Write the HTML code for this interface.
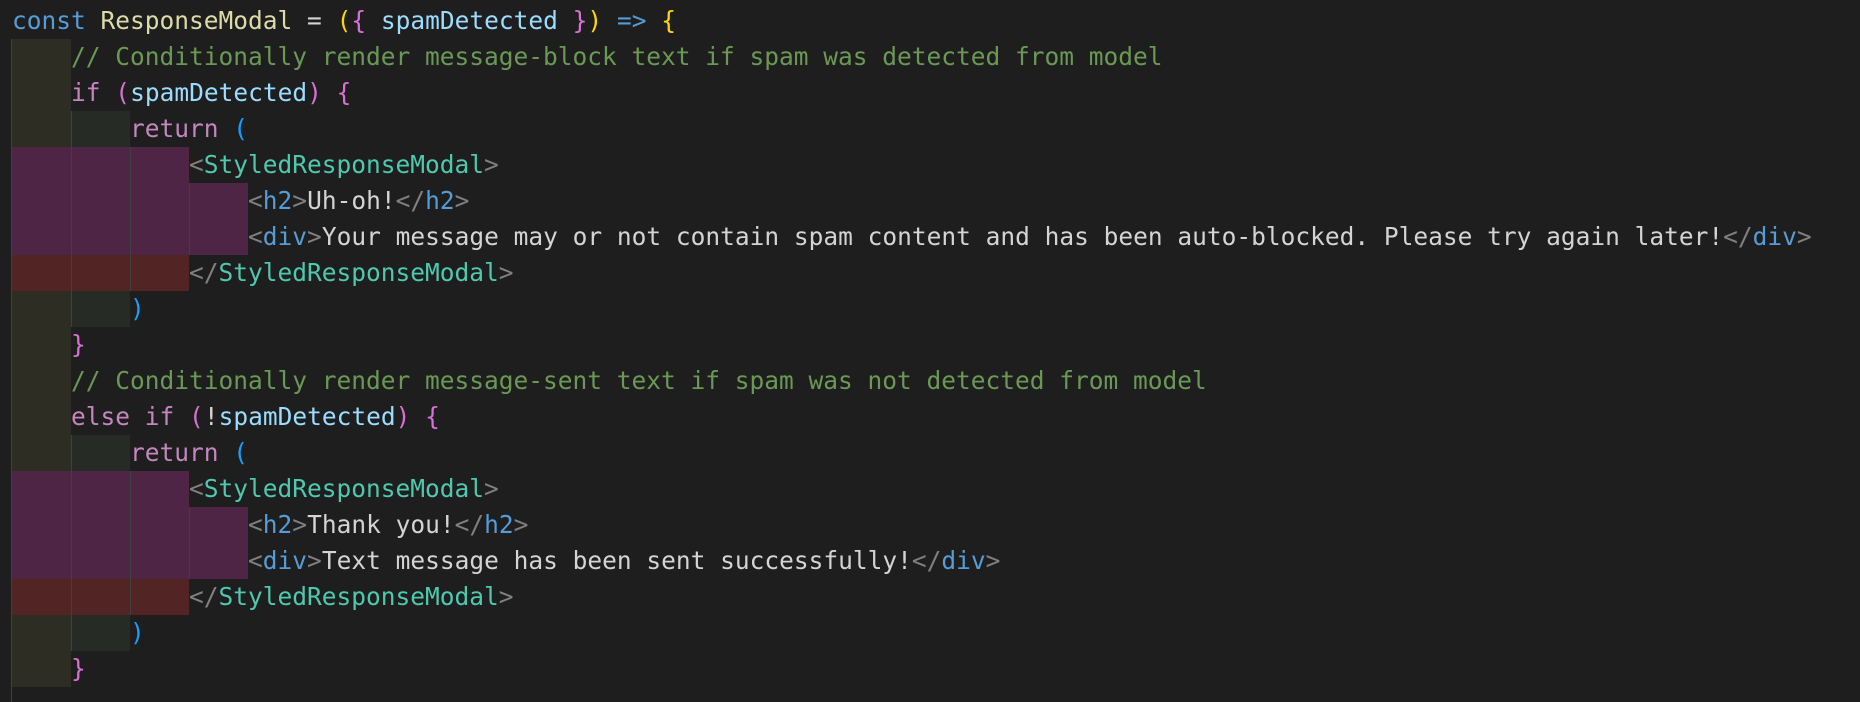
<!DOCTYPE html>
<html><head><meta charset="utf-8"><style>
html,body{margin:0;padding:0;background:#1e1e1e;width:1860px;height:702px;overflow:hidden}
.bg{position:absolute;height:36px}
.y{background:#2d2d24}.g{background:#262b26}.p{background:#4f2545}.r{background:#522424}
.guide{position:absolute;width:1px;background:#404040}
.code{position:absolute;left:12px;top:3px;font-family:"DejaVu Sans Mono","Liberation Mono",monospace;font-size:24.5px;line-height:36px;white-space:pre;color:#d4d4d4}
.k{color:#569cd6}.f{color:#dcdcaa}.v{color:#9cdcfe}.c{color:#6a9955}.m{color:#c586c0}
.b1{color:#ffd700}.b2{color:#da70d6}.b3{color:#179fff}.t{color:#808080}.n{color:#4ec9b0}
</style></head><body>
<div class="bg y" style="left:12px;width:59px;top:39px;height:72px"></div>
<div class="bg y" style="left:12px;width:59px;top:111px"></div><div class="bg g" style="left:71px;width:59px;top:111px"></div>
<div class="bg p" style="left:12px;width:177px;top:147px"></div>
<div class="bg p" style="left:12px;width:236px;top:183px;height:72px"></div>
<div class="bg r" style="left:12px;width:177px;top:255px"></div>
<div class="bg y" style="left:12px;width:59px;top:291px"></div><div class="bg g" style="left:71px;width:59px;top:291px"></div>
<div class="bg y" style="left:12px;width:59px;top:327px;height:108px"></div>
<div class="bg y" style="left:12px;width:59px;top:435px"></div><div class="bg g" style="left:71px;width:59px;top:435px"></div>
<div class="bg p" style="left:12px;width:177px;top:471px"></div>
<div class="bg p" style="left:12px;width:236px;top:507px;height:72px"></div>
<div class="bg r" style="left:12px;width:177px;top:579px"></div>
<div class="bg y" style="left:12px;width:59px;top:615px"></div><div class="bg g" style="left:71px;width:59px;top:615px"></div>
<div class="bg y" style="left:12px;width:59px;top:651px"></div>
<div class="guide" style="left:11px;top:39px;height:663px"></div>
<div class="guide" style="left:71px;top:111px;height:216px"></div>
<div class="guide" style="left:130px;top:147px;height:144px"></div>
<div class="guide" style="left:189px;top:183px;height:72px"></div>
<div class="guide" style="left:71px;top:435px;height:216px"></div>
<div class="guide" style="left:130px;top:471px;height:144px"></div>
<div class="guide" style="left:189px;top:507px;height:72px"></div>
<div class="code"><span class="k">const</span> <span class="f">ResponseModal</span> = <span class="b1">(</span><span class="b2">{</span> <span class="v">spamDetected</span> <span class="b2">}</span><span class="b1">)</span> <span class="k">=&gt;</span> <span class="b1">{</span>
    <span class="c">// Conditionally render message-block text if spam was detected from model</span>
    <span class="m">if</span> <span class="b2">(</span><span class="v">spamDetected</span><span class="b2">)</span> <span class="b2">{</span>
        <span class="m">return</span> <span class="b3">(</span>
            <span class="t">&lt;</span><span class="n">StyledResponseModal</span><span class="t">&gt;</span>
                <span class="t">&lt;</span><span class="k">h2</span><span class="t">&gt;</span>Uh-oh!<span class="t">&lt;/</span><span class="k">h2</span><span class="t">&gt;</span>
                <span class="t">&lt;</span><span class="k">div</span><span class="t">&gt;</span>Your message may or not contain spam content and has been auto-blocked. Please try again later!<span class="t">&lt;/</span><span class="k">div</span><span class="t">&gt;</span>
            <span class="t">&lt;/</span><span class="n">StyledResponseModal</span><span class="t">&gt;</span>
        <span class="b3">)</span>
    <span class="b2">}</span>
    <span class="c">// Conditionally render message-sent text if spam was not detected from model</span>
    <span class="m">else if</span> <span class="b2">(</span>!<span class="v">spamDetected</span><span class="b2">)</span> <span class="b2">{</span>
        <span class="m">return</span> <span class="b3">(</span>
            <span class="t">&lt;</span><span class="n">StyledResponseModal</span><span class="t">&gt;</span>
                <span class="t">&lt;</span><span class="k">h2</span><span class="t">&gt;</span>Thank you!<span class="t">&lt;/</span><span class="k">h2</span><span class="t">&gt;</span>
                <span class="t">&lt;</span><span class="k">div</span><span class="t">&gt;</span>Text message has been sent successfully!<span class="t">&lt;/</span><span class="k">div</span><span class="t">&gt;</span>
            <span class="t">&lt;/</span><span class="n">StyledResponseModal</span><span class="t">&gt;</span>
        <span class="b3">)</span>
    <span class="b2">}</span></div>
</body></html>
